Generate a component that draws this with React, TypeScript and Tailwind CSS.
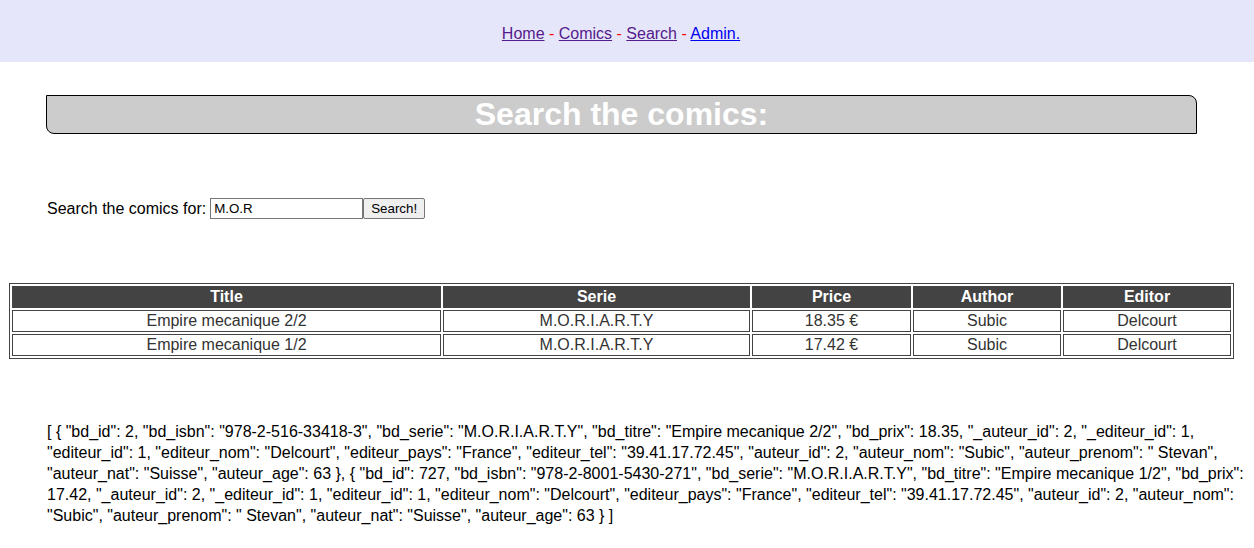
const rows = [
  { title: 'Empire mecanique 2/2', serie: 'M.O.R.I.A.R.T.Y', price: '18.35 €', author: 'Subic', editor: 'Delcourt' },
  { title: 'Empire mecanique 1/2', serie: 'M.O.R.I.A.R.T.Y', price: '17.42 €', author: 'Subic', editor: 'Delcourt' },
];

const json =
  '[ { "bd_id": 2, "bd_isbn": "978-2-516-33418-3", "bd_serie": "M.O.R.I.A.R.T.Y", "bd_titre": "Empire mecanique 2/2", "bd_prix": 18.35, "_auteur_id": 2, "_editeur_id": 1, "editeur_id": 1, "editeur_nom": "Delcourt", "editeur_pays": "France", "editeur_tel": "39.41.17.72.45", "auteur_id": 2, "auteur_nom": "Subic", "auteur_prenom": " Stevan", "auteur_nat": "Suisse", "auteur_age": 63 }, { "bd_id": 727, "bd_isbn": "978-2-8001-5430-271", "bd_serie": "M.O.R.I.A.R.T.Y", "bd_titre": "Empire mecanique 1/2", "bd_prix": 17.42, "_auteur_id": 2, "_editeur_id": 1, "editeur_id": 1, "editeur_nom": "Delcourt", "editeur_pays": "France", "editeur_tel": "39.41.17.72.45", "auteur_id": 2, "auteur_nom": "Subic", "auteur_prenom": " Stevan", "auteur_nat": "Suisse", "auteur_age": 63 } ]';

export default function App() {
  return (
    <div className="min-h-[548px] bg-white text-base text-black font-['Liberation_Sans',Arial,sans-serif]">
      <nav className="bg-[#e6e6fa] pt-[25px] pb-[19px] pr-[12px] text-center leading-[18px]">
        <a href="#" className="text-[#551a8b] underline">Home</a>
        <span className="text-[#ff0000]"> - </span>
        <a href="#" className="text-[#551a8b] underline">Comics</a>
        <span className="text-[#ff0000]"> - </span>
        <a href="#" className="text-[#551a8b] underline">Search</a>
        <span className="text-[#ff0000]"> - </span>
        <a href="#" className="text-[#0000ee] underline">Admin.</a>
      </nav>

      <h1 className="mt-[33px] ml-[46px] w-[1151px] border border-black bg-[#cccccc] rounded-tr-[8px] rounded-bl-[8px] text-center text-[32px] leading-[37px] font-bold text-white">
        Search the comics:
      </h1>

      <form className="mt-[64px] ml-[47px] flex items-center h-[21px]" onSubmit={(e) => e.preventDefault()}>
        <label className="mr-[4px]">Search the comics for:</label>
        <input
          defaultValue="M.O.R"
          className="w-[153px] h-[21px] border border-[#767676] px-[3px] text-[13.33px] outline-none"
        />
        <button className="w-[62px] h-[21px] border border-[#767676] rounded-[2px] bg-[#efefef] text-[13.33px]">
          Search!
        </button>
      </form>

      <table className="mt-[64px] ml-[9px] w-[1225px] table-fixed border-separate border-spacing-[2px] border border-[#444] text-[#333] text-center">
        <thead>
          <tr className="bg-[#434343] text-white font-bold">
            <th className="w-[429px] border border-[#444] p-px leading-[18px]">Title</th>
            <th className="w-[307px] border border-[#444] p-px leading-[18px]">Serie</th>
            <th className="w-[159px] border border-[#444] p-px leading-[18px]">Price</th>
            <th className="w-[148px] border border-[#444] p-px leading-[18px]">Author</th>
            <th className="w-[168px] border border-[#444] p-px leading-[18px]">Editor</th>
          </tr>
        </thead>
        <tbody>
          {rows.map((r) => (
            <tr key={r.title}>
              <td className="border border-[#444] p-px leading-[18px]">{r.title}</td>
              <td className="border border-[#444] p-px leading-[18px]">{r.serie}</td>
              <td className="border border-[#444] p-px leading-[18px]">{r.price}</td>
              <td className="border border-[#444] p-px leading-[18px]">{r.author}</td>
              <td className="border border-[#444] p-px leading-[18px]">{r.editor}</td>
            </tr>
          ))}
        </tbody>
      </table>

      <p className="mt-[62px] ml-[47px] mr-[4px] leading-[21px]">{json}</p>
    </div>
  );
}
